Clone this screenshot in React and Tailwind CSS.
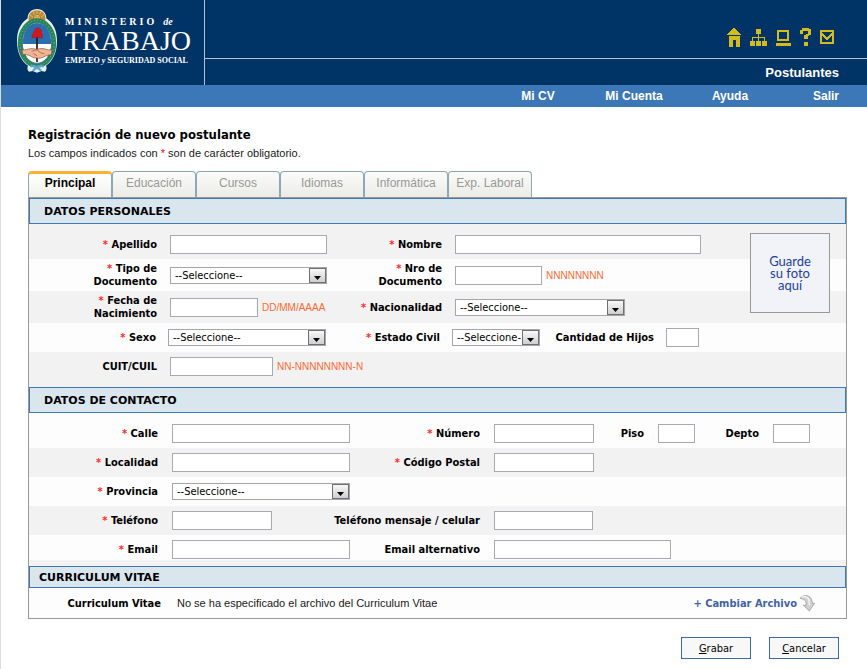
import React from "react";

const FONT = "font-['DejaVu_Sans_Condensed','DejaVu_Sans',sans-serif]";
const ARIAL = "font-['Liberation_Sans',Arial,sans-serif]";

function Label({ htmlFor, required, children }) {
  return (
    <label htmlFor={htmlFor} className="text-right font-bold text-black">
      {required && <span className="text-[#ff2a2a]">* </span>}
      {children}
    </label>
  );
}

function Field({ id, className, type = "text" }) {
  return (
    <input
      id={id}
      type={type}
      className={`block h-[19px] border border-[#a9a9b1] bg-white px-1 outline-none ${className}`}
    />
  );
}

function Select({ id, className }) {
  return (
    <div className={`relative h-[17px] ${className}`}>
      <select
        id={id}
        className="block h-full w-full appearance-none border border-[#a5a5ad] bg-white pl-1 pr-[18px] text-[11px] leading-[15px] text-black outline-none"
      >
        <option>--Seleccione--</option>
      </select>
      <span className="pointer-events-none absolute right-px top-px flex h-[15px] w-[17px] items-end justify-center border border-[#707070] bg-linear-to-b from-[#f8f8f8] to-[#cfcfcf] pb-[2px]">
        <svg width="7" height="4" viewBox="0 0 7 4" aria-hidden="true">
          <path d="M0 0h7L3.5 4z" fill="#000" />
        </svg>
      </span>
    </div>
  );
}

function Hint({ children }) {
  return <span className={`${ARIAL} text-[10px] text-[#ff6a33]`}>{children}</span>;
}

function SectionTitle({ className, children }) {
  return (
    <h2
      className={`flex items-center border border-[#4279b5] bg-[#dae6ee] font-['DejaVu_Sans',sans-serif] text-[11px] font-bold text-black ${className}`}
    >
      {children}
    </h2>
  );
}

const personal = "grid grid-cols-[128px_159px_100px_1fr] items-center gap-x-[13px]";
const status = "grid grid-cols-[127px_160px_100px_88px_102px_1fr] items-center gap-x-3";
const contact = "grid grid-cols-[129px_178px_116px_100px_36px_37px_50px_1fr] items-center gap-x-[14px]";
const phones = "grid grid-cols-[129px_100px_194px_1fr] items-center gap-x-[14px]";
const dark = "bg-[#f2f2f2]";
const light = "bg-[#fdfdfd]";

function Crest() {
  return (
    <svg width="42" height="66" viewBox="0 0 126 198" aria-hidden="true">
      <path
        d="M60 3C43 3 32 15 32 31 11 45 0 68 0 98c0 34 12 61 33 75-3 6-2 13 3 18l11-2 13 5 13-5 11 2c5-5 6-12 3-18 21-14 33-41 33-75 0-30-11-53-32-67C88 15 77 3 60 3z"
        fill="#e9eff0"
      />
      <path d="M35 38C33 18 43 7 60 7s27 11 25 31z" fill="#b98a35" />
      <path
        d="M60 8v12M48 10l5 12M72 10l-5 12M39 20l9 8M81 20l-9 8"
        stroke="#f3d692"
        strokeWidth="2"
      />
      <circle cx="60" cy="29" r="10" fill="#e9b85c" stroke="#8b642a" strokeWidth="2" />
      <path d="M55 27h3M62 27h3M57 33h7" stroke="#6b4514" strokeWidth="2" />
      <ellipse cx="60" cy="105" rx="51" ry="68" fill="none" stroke="#23865a" strokeWidth="13" />
      <ellipse
        cx="60"
        cy="105"
        rx="51"
        ry="68"
        fill="none"
        stroke="#9fcfae"
        strokeWidth="2"
        strokeDasharray="3 7"
      />
      <ellipse cx="60" cy="105" rx="44" ry="61" fill="#fff" stroke="#16364c" strokeWidth="2" />
      <path d="M17 108C17 71 34 45 60 45s43 26 43 63z" fill="#2a6fae" />
      <path d="M60 88v74" stroke="#2d1512" strokeWidth="5" />
      <path
        d="M45 90c-1-10 4-13 6-19 2-8 8-13 14-11 7 2 9 8 8 14 4 4 4 10 2 17-9-4-19-4-30-1z"
        fill="#d4171f"
        stroke="#861318"
        strokeWidth="1"
      />
      <path
        d="M15 126c11 0 17-3 27-4 7-1 12 2 18 2 9-3 16-3 24-1 7 2 13 3 21 3l-2 14c-12 1-15 3-23 7-6 3-14 5-21 3-8 0-13-2-19-6-7-4-13-4-23-5z"
        fill="#f0b592"
        stroke="#84513a"
        strokeWidth="2"
      />
      <path d="M44 130l16-5 10 9 12 4M49 137l11 6" fill="none" stroke="#84513a" strokeWidth="2" />
      <path
        d="M40 176c8-5 13-3 20 3 7-6 12-8 20-3M60 179l-13 9M60 179l13 9"
        fill="none"
        stroke="#5ba5d2"
        strokeWidth="6"
      />
    </svg>
  );
}

function HeaderIcons() {
  const items = [
    [
      "Inicio",
      14,
      <>
        <path d="M7 0 14 6v1H0V6z" />
        <path d="M2 8h11v11H9v-7H6v7H2z" />
      </>,
    ],
    [
      "Mapa del sitio",
      17,
      <path d="M6 1h5v5H9v3h6v4h2v5h-5v-5h2v-3H9v3h2v5H6v-5h2v-3H3v3h2v5H0v-5h2V9h6V6H6z" />,
    ],
    [
      "Equipo",
      15,
      <>
        <path fillRule="evenodd" d="M1 2h12v11H1zM3 4v7h8V4z" />
        <path d="M0 15h15v3H0z" />
      </>,
    ],
    ["Consultas", 11, <path d="M2 0h7v1h2v6H9v1H8v3H4V7h2V6h2V3H3v3H0V2h2zM4 14h4v4H4z" />],
    [
      "Correo",
      14,
      <path fillRule="evenodd" d="M0 2h14v14H0zM2 4v1l5 4 5-4V4zM2 8v6h10V8l-5 4z" />,
    ],
  ];
  return (
    <nav aria-label="Accesos" className="flex h-[58px] items-center justify-end gap-[9px] pr-[33px] pt-[17px]">
      {items.map(([name, width, shape]) => (
        <a key={name} href="#" aria-label={name} className="block">
          <svg
            width={width}
            height="19"
            viewBox={`0 0 ${width} 19`}
            fill="#d2bb1b"
            shapeRendering="crispEdges"
            aria-hidden="true"
          >
            {shape}
          </svg>
        </a>
      ))}
    </nav>
  );
}

const tabs = ["Principal", "Educación", "Cursos", "Idiomas", "Informática", "Exp. Laboral"];

export default function App() {
  return (
    <div className={`min-h-screen border-l border-[#dcdcdc] bg-white text-[11px] leading-[13px] text-[#1a1a1a] ${FONT}`}>
      <header>
        <div className="flex h-[85px] bg-[#003366]">
          <div className="flex w-[204px] shrink-0 items-start gap-[6px] border-r border-[#b4c2d1] pl-4 pt-2 font-['Liberation_Serif',serif] text-white">
            <Crest />
            <div className="pt-2">
              <div className="flex items-baseline gap-[6px] whitespace-nowrap text-[10px] font-bold leading-3">
                <span className="tracking-[3px]">MINISTERIO</span>
                <span className="italic">de</span>
              </div>
              <div className="text-[28px] leading-[26px]">TRABAJO</div>
              <div className="whitespace-nowrap text-[8px] font-bold leading-[14px]">
                EMPLEO <span className="italic">y</span> SEGURIDAD SOCIAL
              </div>
            </div>
          </div>
          <div className={`flex-1 ${ARIAL}`}>
            <HeaderIcons />
            <div className="flex h-[27px] items-center justify-end border-t border-[#b4c2d1] pr-7 text-[13px] font-bold text-white">
              Postulantes
            </div>
          </div>
        </div>
        <nav className={`flex h-[22px] items-center justify-end bg-[#3c78b7] text-[12px] font-bold text-white ${ARIAL}`}>
          <a href="#" className="w-24 text-center">Mi CV</a>
          <a href="#" className="w-24 text-center">Mi Cuenta</a>
          <a href="#" className="w-24 text-center">Ayuda</a>
          <a href="#" className="w-[89px] pr-7 text-right">Salir</a>
        </nav>
      </header>

      <main className="pl-[27px] pr-5 pt-5">
        <h1 className="text-[13px] font-bold leading-4 text-black">Registración de nuevo postulante</h1>
        <p className={`pt-1 ${ARIAL}`}>
          Los campos indicados con <span className="text-[#ff0000]">*</span> son de carácter obligatorio.
        </p>

        <form className="pt-[11px]" onSubmit={(e) => e.preventDefault()}>
          <div role="tablist" className={`flex text-[12px] ${ARIAL}`}>
            {tabs.map((name, i) => (
              <button
                key={name}
                type="button"
                role="tab"
                aria-selected={i === 0}
                className={
                  i === 0
                    ? "h-[26px] w-[84px] rounded-t-[4px] border-x border-t-[3px] border-x-[#8fa7b3] border-t-[#fbb02e] bg-linear-to-b from-white to-[#f1f1ec] pb-1 font-bold text-black"
                    : "h-[26px] w-[84px] rounded-t-[4px] border-x border-t border-[#8fa7b3] bg-linear-to-b from-[#fbfbf9] to-[#ebece6] pb-[2px] text-[#999999]"
                }
              >
                {name}
              </button>
            ))}
          </div>

          <div className="relative border border-[#999999]">
            <section>
              <SectionTitle className="h-[26px] pl-[14px]">DATOS PERSONALES</SectionTitle>
              <div className={`${personal} ${dark} h-[35px] pt-[6px]`}>
                <Label htmlFor="apellido" required>Apellido</Label>
                <Field id="apellido" className="w-[157px]" />
                <Label htmlFor="nombre" required>Nombre</Label>
                <Field id="nombre" className="w-[246px]" />
              </div>
              <div className={`${personal} ${light} h-8`}>
                <Label htmlFor="tipo" required>Tipo de<br />Documento</Label>
                <Select id="tipo" className="w-[157px]" />
                <Label htmlFor="nro" required>Nro de<br />Documento</Label>
                <div className="flex items-center gap-1">
                  <Field id="nro" className="w-[87px]" />
                  <Hint>NNNNNNNN</Hint>
                </div>
              </div>
              <div className={`${personal} ${dark} h-8`}>
                <Label htmlFor="fecha" required>Fecha de<br />Nacimiento</Label>
                <div className="flex items-center gap-1">
                  <Field id="fecha" className="w-[88px]" />
                  <Hint>DD/MM/AAAA</Hint>
                </div>
                <Label htmlFor="nacionalidad" required>Nacionalidad</Label>
                <Select id="nacionalidad" className="w-[170px]" />
              </div>
              <div className={`${status} ${light} h-[29px]`}>
                <Label htmlFor="sexo" required>Sexo</Label>
                <Select id="sexo" className="w-[158px]" />
                <Label htmlFor="estado" required>Estado Civil</Label>
                <Select id="estado" className="w-[88px]" />
                <Label htmlFor="hijos">Cantidad de Hijos</Label>
                <Field id="hijos" className="w-[33px]" />
              </div>
              <div className={`${personal} ${dark} h-[35px] pb-[6px]`}>
                <Label htmlFor="cuit">CUIT/CUIL</Label>
                <div className="col-span-3 flex items-center gap-1">
                  <Field id="cuit" className="w-[103px]" />
                  <Hint>NN-NNNNNNNN-N</Hint>
                </div>
              </div>
            </section>

            <section>
              <SectionTitle className="h-[26px] pl-[14px]">DATOS DE CONTACTO</SectionTitle>
              <div className={`${contact} ${light} h-[35px] pt-[6px]`}>
                <Label htmlFor="calle" required>Calle</Label>
                <Field id="calle" className="w-full" />
                <Label htmlFor="numero" required>Número</Label>
                <Field id="numero" className="w-full" />
                <Label htmlFor="piso">Piso</Label>
                <Field id="piso" className="w-full" />
                <Label htmlFor="depto">Depto</Label>
                <Field id="depto" className="w-[37px]" />
              </div>
              <div className={`${contact} ${dark} h-[29px]`}>
                <Label htmlFor="localidad" required>Localidad</Label>
                <Field id="localidad" className="w-full" />
                <Label htmlFor="postal" required>Código Postal</Label>
                <Field id="postal" className="w-full" />
              </div>
              <div className={`${contact} ${light} h-[29px]`}>
                <Label htmlFor="provincia" required>Provincia</Label>
                <Select id="provincia" className="w-full" />
              </div>
              <div className={`${phones} ${dark} h-[29px]`}>
                <Label htmlFor="telefono" required>Teléfono</Label>
                <Field id="telefono" type="tel" className="w-full" />
                <Label htmlFor="celular">Teléfono mensaje / celular</Label>
                <Field id="celular" type="tel" className="w-[99px]" />
              </div>
              <div className={`${contact} ${light} h-[25px] pt-1`}>
                <Label htmlFor="email" required>Email</Label>
                <Field id="email" type="email" className="w-full" />
                <Label htmlFor="email2">Email alternativo</Label>
                <div className="col-span-5">
                  <Field id="email2" type="email" className="w-[177px]" />
                </div>
              </div>
              <div className={`${dark} h-[6px]`} />
            </section>

            <section>
              <SectionTitle className="h-[22px] pl-[9px]">CURRICULUM VITAE</SectionTitle>
              <div className={`${light} flex h-[30px] items-center pr-[31px]`}>
                <span className="w-[132px] text-right font-bold text-black">Curriculum Vitae</span>
                <span className={`flex-1 pl-4 ${ARIAL}`}>No se ha especificado el archivo del Curriculum Vitae</span>
                <a href="#" className="flex items-center gap-[2px] font-bold text-[#3f64a4]">
                  + Cambiar Archivo
                  <svg width="16" height="18" viewBox="0 0 48 54" aria-hidden="true">
                    <path
                      d="M3 13C10 3 28 1 36 13c3 5 4 10 4 15h7L31 51 13 34h8c1-8-1-14-5-16-4-3-8-3-13-5z"
                      fill="#cfcfcf"
                      stroke="#929292"
                      strokeWidth="2"
                    />
                    <path d="M8 10c8-4 18-2 21 6 2 5 2 10 2 18" fill="none" stroke="#f7f7f7" strokeWidth="4" />
                  </svg>
                </a>
              </div>
            </section>

            <button
              type="button"
              className="absolute right-4 top-[35px] h-20 w-20 border border-[#999999] bg-[#f2f3f8] font-['Lato',sans-serif] text-[13px] leading-3 text-[#1c3fa0]"
            >
              Guarde<br />su foto<br />aquí
            </button>
          </div>

          <div className="flex justify-end gap-[18px] pr-2 pt-[18px] text-black">
            <button type="submit" className="h-[22px] w-[70px] border border-[#4068a8] bg-[#f8f8f8]">
              <span className="underline">G</span>rabar
            </button>
            <button type="button" className="h-[22px] w-[70px] border border-[#4068a8] bg-[#f8f8f8]">
              <span className="underline">C</span>ancelar
            </button>
          </div>
        </form>
      </main>
    </div>
  );
}
